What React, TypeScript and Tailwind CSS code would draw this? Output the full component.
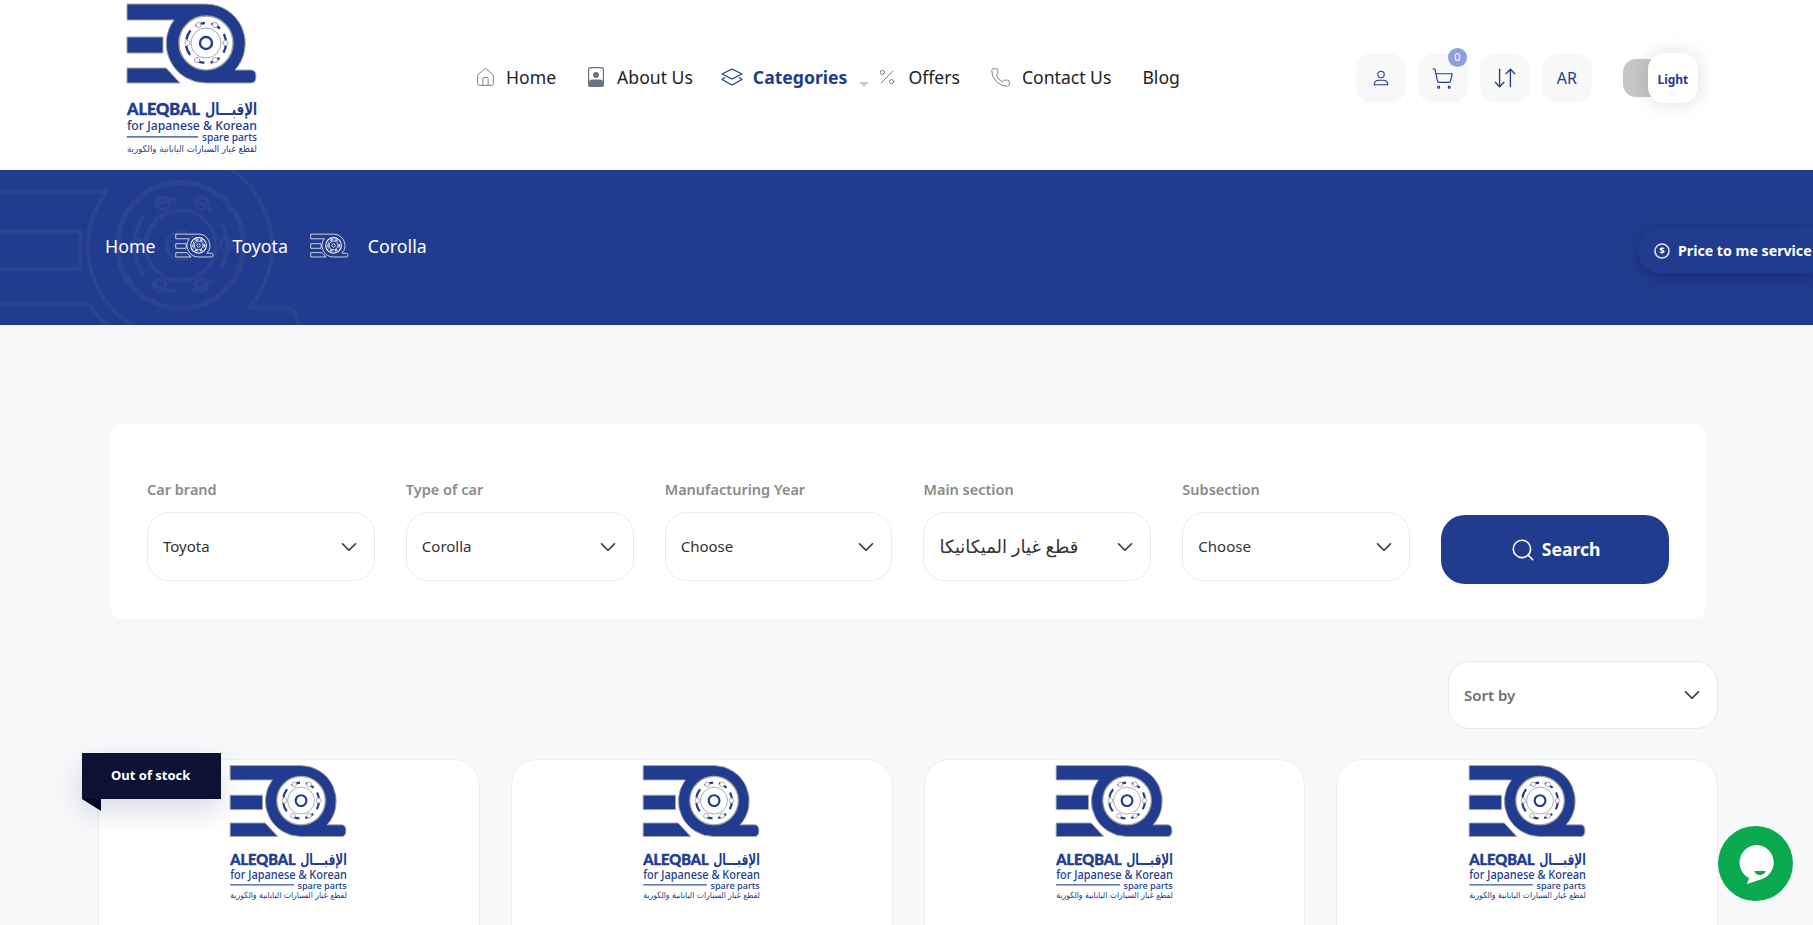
import { Percent, Phone, Search, ShoppingCart, ArrowDownUp, ChevronDown, House } from "lucide-react";

const blue = "#213c8e";

function Mark({ line = false, weight = 1 }: { line?: boolean; weight?: number }) {
  const fill = line ? "none" : blue;
  const stroke = line ? "currentColor" : "#a5a5a5";
  const disc = line ? "none" : "#ffffff";
  const balls: [number, number][] = [
    [98.5, 25],
    [115, 25],
    [87.5, 43],
    [125.5, 43],
    [97, 60],
    [115, 60],
  ];
  return (
    <g strokeLinejoin="round">
      <path d="M27 4H106A39.5 39.5 0 0 1 135 70H151Q156 70 156 76.5Q156 83 151 83H106A39.5 39.5 0 0 1 74 20H27Z" fill={fill} stroke={stroke} strokeWidth={weight} />
      <path d="M27 37H63V53H27Z" fill={fill} stroke={stroke} strokeWidth={weight} />
      <path d="M27 68H66L80 83H27Z" fill={fill} stroke={stroke} strokeWidth={weight} />
      <circle cx="106" cy="43" r="27" fill={disc} stroke={stroke} strokeWidth={weight * 1.4} />
      <circle cx="106" cy="43" r="20" fill="none" stroke={line ? "currentColor" : blue} strokeWidth={line ? weight : 2.4} strokeDasharray="10 6.5" />
      {balls.map(([cx, cy]) => (
        <circle key={`${cx}-${cy}`} cx={cx} cy={cy} r="2.6" fill={disc} stroke={stroke} strokeWidth={weight} />
      ))}
      <circle cx="106" cy="43" r="15" fill={disc} stroke={stroke} strokeWidth={weight} />
      <circle cx="106" cy="43" r="6" fill="none" stroke={line ? "currentColor" : blue} strokeWidth={line ? weight : 2.4} />
    </g>
  );
}

function Logo({ className }: { className: string }) {
  return (
    <svg viewBox="26 0 132 156" className={className} fill={blue}>
      <Mark />
      <text x="27" y="115" fontSize="17" textLength="73" lengthAdjust="spacingAndGlyphs" stroke={blue} strokeWidth="0.5" className="font-['Lato',sans-serif] font-black">
        ALEQBAL
      </text>
      <text x="157" y="115" fontSize="17" textAnchor="end" textLength="52" lengthAdjust="spacingAndGlyphs" className="font-['DejaVu_Sans',sans-serif] font-bold">
        الإقبـــال
      </text>
      <text x="27" y="130" fontSize="13" textLength="130" lengthAdjust="spacingAndGlyphs" className="font-['Noto_Sans',sans-serif] font-medium">
        for Japanese &amp; Korean
      </text>
      <rect x="27" y="136.3" width="71" height="1.2" />
      <text x="157" y="141" fontSize="10.5" textAnchor="end" textLength="55" lengthAdjust="spacingAndGlyphs" className="font-['Noto_Sans',sans-serif] font-medium">
        spare parts
      </text>
      <text x="157" y="151.5" fontSize="9.5" textAnchor="end" textLength="130" lengthAdjust="spacingAndGlyphs" className="font-['DejaVu_Sans',sans-serif]">
        لقطع غيار السيارات اليابانية والكورية
      </text>
    </svg>
  );
}

function AboutIcon() {
  return (
    <svg width="16" height="20" viewBox="0 0 16 20" className="text-gray-500">
      <rect x="0.6" y="0.6" width="14.8" height="18.8" rx="1.5" fill="none" stroke="currentColor" strokeWidth="1.2" />
      <circle cx="8" cy="8" r="3" fill="currentColor" />
      <path d="M1 19V15.5Q1 12.5 4.5 12.5H11.5Q15 12.5 15 15.5V19Z" fill="currentColor" />
    </svg>
  );
}

function LayersIcon() {
  return (
    <svg width="22" height="18" viewBox="0 0 22 18" fill="none" stroke="currentColor" strokeWidth="1.2" strokeLinejoin="round">
      <path d="M11 1L21 6L11 11L1 6Z" />
      <path d="M4 9.5L1 11.5L11 17L21 11.5L18 9.5" />
    </svg>
  );
}

function UserIcon() {
  return (
    <svg width="16" height="16" viewBox="0 0 16 16" fill="none" stroke={blue} strokeWidth="1.1">
      <circle cx="8" cy="4.5" r="3.2" />
      <path d="M1.2 14.8Q1.2 10.2 6 10.2H10Q14.8 10.2 14.8 14.8Z" />
    </svg>
  );
}

function Field({ label, value, arabic = false }: { label: string; value: string; arabic?: boolean }) {
  return (
    <div>
      <p className="mb-3 h-5 text-[14.5px] font-semibold leading-[19px] text-[#8b8b8b]">{label}</p>
      <div className="flex h-[69px] items-center justify-between rounded-[22px] border border-[#ececec] bg-white pl-[15px] pr-[12px] text-[#333]">
        <span className={arabic ? "text-[18px]" : "text-[15px]"}>{value}</span>
        <ChevronDown size={26} strokeWidth={1.5} />
      </div>
    </div>
  );
}

function NavLink({ icon, label, active = false, className = "gap-3" }: { icon?: React.ReactNode; label: string; active?: boolean; className?: string }) {
  return (
    <a className={`flex items-center text-[17.6px] ${className} ${active ? "font-bold text-[#213c8e]" : "text-[#222]"}`}>
      {icon}
      {label}
    </a>
  );
}

function Card({ soldOut = false }: { soldOut?: boolean }) {
  return (
    <div className="relative flex h-[420px] justify-center rounded-[26px] border border-[#eeeeee] bg-white pt-[2px]">
      {soldOut && (
        <div className="absolute left-[-17px] top-[-7px]">
          <div className="flex h-[46px] w-[139px] items-center bg-[#0b1233] pl-[29px] text-[13px] font-bold text-white shadow-[0_12px_28px_rgba(20,30,80,0.16)]">
            Out of stock
          </div>
          <div className="h-0 w-0 border-l-[19px] border-t-[12px] border-l-transparent border-t-[#050a22]" />
        </div>
      )}
      <Logo className="h-[140px] w-[119px]" />
    </div>
  );
}

export default function App() {
  return (
    <div className="relative h-screen overflow-hidden bg-[#f7f8fa] font-['Noto_Sans','DejaVu_Sans',sans-serif]">
      <header className="flex h-[170px] items-center bg-white pl-[126px]">
        <Logo className="h-[156px] w-[132px] self-start" />
        <nav className="mb-[15px] ml-[217px] flex items-center gap-[30px]">
          <NavLink icon={<House size={21} strokeWidth={1} className="text-gray-500" />} label="Home" className="gap-[10px]" />
          <NavLink icon={<AboutIcon />} label="About Us" className="ml-[2px] gap-[13px]" />
          <div className="-ml-[2px] flex items-center">
            <NavLink icon={<LayersIcon />} label="Categories" active className="gap-[10px]" />
            <span className="ml-3 mt-[14px] h-0 w-0 border-x-[5px] border-t-[5px] border-x-transparent border-t-[#c8ccd6]" />
          </div>
          <div className="-ml-[22px]">
            <NavLink icon={<Percent size={20} strokeWidth={1.1} className="text-gray-500" />} label="Offers" className="gap-[11px]" />
          </div>
          <NavLink icon={<Phone size={21} strokeWidth={1} className="text-gray-500" />} label="Contact Us" className="gap-[11px]" />
          <NavLink label="Blog" className="ml-[1px]" />
        </nav>
        <div className="mb-[14px] ml-[176px] flex items-center gap-3 text-[#213c8e]">
          <button className="flex size-[50px] items-center justify-center rounded-2xl bg-[#f8f8f8]">
            <UserIcon />
          </button>
          <button className="relative flex size-[50px] items-center justify-center rounded-2xl bg-[#f8f8f8]">
            <ShoppingCart size={23} strokeWidth={1.2} />
            <span className="absolute left-[30px] top-[-5px] flex size-[19px] items-center justify-center rounded-full bg-[#8d9fdc] text-[11px] text-white">0</span>
          </button>
          <button className="flex size-[50px] items-center justify-center rounded-2xl bg-[#f8f8f8]">
            <ArrowDownUp size={26} strokeWidth={1.2} />
          </button>
          <button className="flex size-[50px] items-center justify-center rounded-2xl bg-[#f8f8f8] text-[16px]">AR</button>
          <div className="relative ml-[19px] h-[38px] w-[60px] rounded-[13px] bg-[#c6c6c6]">
            <div className="absolute left-[25px] top-[-6px] flex size-[50px] items-center justify-center rounded-2xl bg-white pt-1 text-[12px] font-bold text-[#213c8e] shadow-[0_0_20px_rgba(0,0,0,0.14)]">
              Light
            </div>
          </div>
        </div>
      </header>

      <section className="relative flex h-[155px] items-center gap-[19px] overflow-hidden bg-[#213c8e] pb-[3px] pl-[105px] text-[17.8px] text-white">
        <svg viewBox="26 0 132 90" className="absolute left-[-6px] top-[-25px] h-[210px] w-[308px] text-white opacity-[0.04]">
          <Mark line weight={1.6} />
        </svg>
        <span className="relative">Home</span>
        <svg viewBox="26 0 132 90" className="relative h-[26px] w-[39px]">
          <g className="text-white">
            <Mark line weight={2.6} />
          </g>
        </svg>
        <span className="relative">Toyota</span>
        <svg viewBox="26 0 132 90" className="relative ml-[3px] h-[26px] w-[39px]">
          <g className="text-white">
            <Mark line weight={2.6} />
          </g>
        </svg>
        <span className="relative">Corolla</span>
      </section>

      <div className="absolute right-0 top-[228px] flex h-[45px] w-[175px] items-center gap-2 rounded-l-[22px] bg-[#213c8e] pl-4 text-[14.2px] font-bold text-white shadow-[0_4px_14px_rgba(10,20,70,0.35)]">
        <svg width="16" height="16" viewBox="0 0 16 16" className="shrink-0">
          <circle cx="8" cy="8" r="7" fill="none" stroke="#fff" strokeWidth="1.6" opacity="0.85" />
          <text x="8" y="11.2" fontSize="9.5" textAnchor="middle" fill="#fff" className="font-bold">
            $
          </text>
        </svg>
        <span className="whitespace-nowrap">Price to me service</span>
      </div>

      <main className="pl-[98px] pr-[95px] pt-[99px]">
        <div className="mx-3 grid h-[195px] grid-cols-6 items-start gap-[31px] rounded-[14px] bg-white px-[37px] pt-14">
          <Field label="Car brand" value="Toyota" />
          <Field label="Type of car" value="Corolla" />
          <Field label="Manufacturing Year" value="Choose" />
          <Field label="Main section" value="قطع غيار الميكانيكا" arabic />
          <Field label="Subsection" value="Choose" />
          <button className="mt-[35px] flex h-[69px] items-center justify-center gap-[6px] rounded-[24px] bg-[#213c8e] text-[17.6px] font-bold text-white">
            <Search size={26} strokeWidth={1.5} />
            Search
          </button>
        </div>

        <div className="mt-[42px] flex justify-end">
          <div className="flex h-[68px] w-[270px] items-center justify-between rounded-[22px] border border-[#e8e8e8] bg-white pl-[15px] pr-[12px] text-[15px] font-semibold text-[#707070]">
            <span>Sort by</span>
            <ChevronDown size={26} strokeWidth={1.5} className="text-[#333]" />
          </div>
        </div>

        <div className="mt-[30px] grid grid-cols-4 gap-[31px]">
          <Card soldOut />
          <Card />
          <Card />
          <Card />
        </div>
      </main>

      <div className="absolute left-[1718px] top-[826px] flex size-[75px] items-center justify-center rounded-full bg-[#0aa84f]">
        <svg width="40" height="42" viewBox="0 0 40 42">
          <path d="M20 2A17.5 17.5 0 0 1 26 36L11 41L13 35A17.5 17.5 0 0 1 20 2Z" fill="#fff" />
          <path d="M18 28H30Q28 32 24 32Q20 32 18 28Z" fill="#0aa84f" />
        </svg>
      </div>
    </div>
  );
}
